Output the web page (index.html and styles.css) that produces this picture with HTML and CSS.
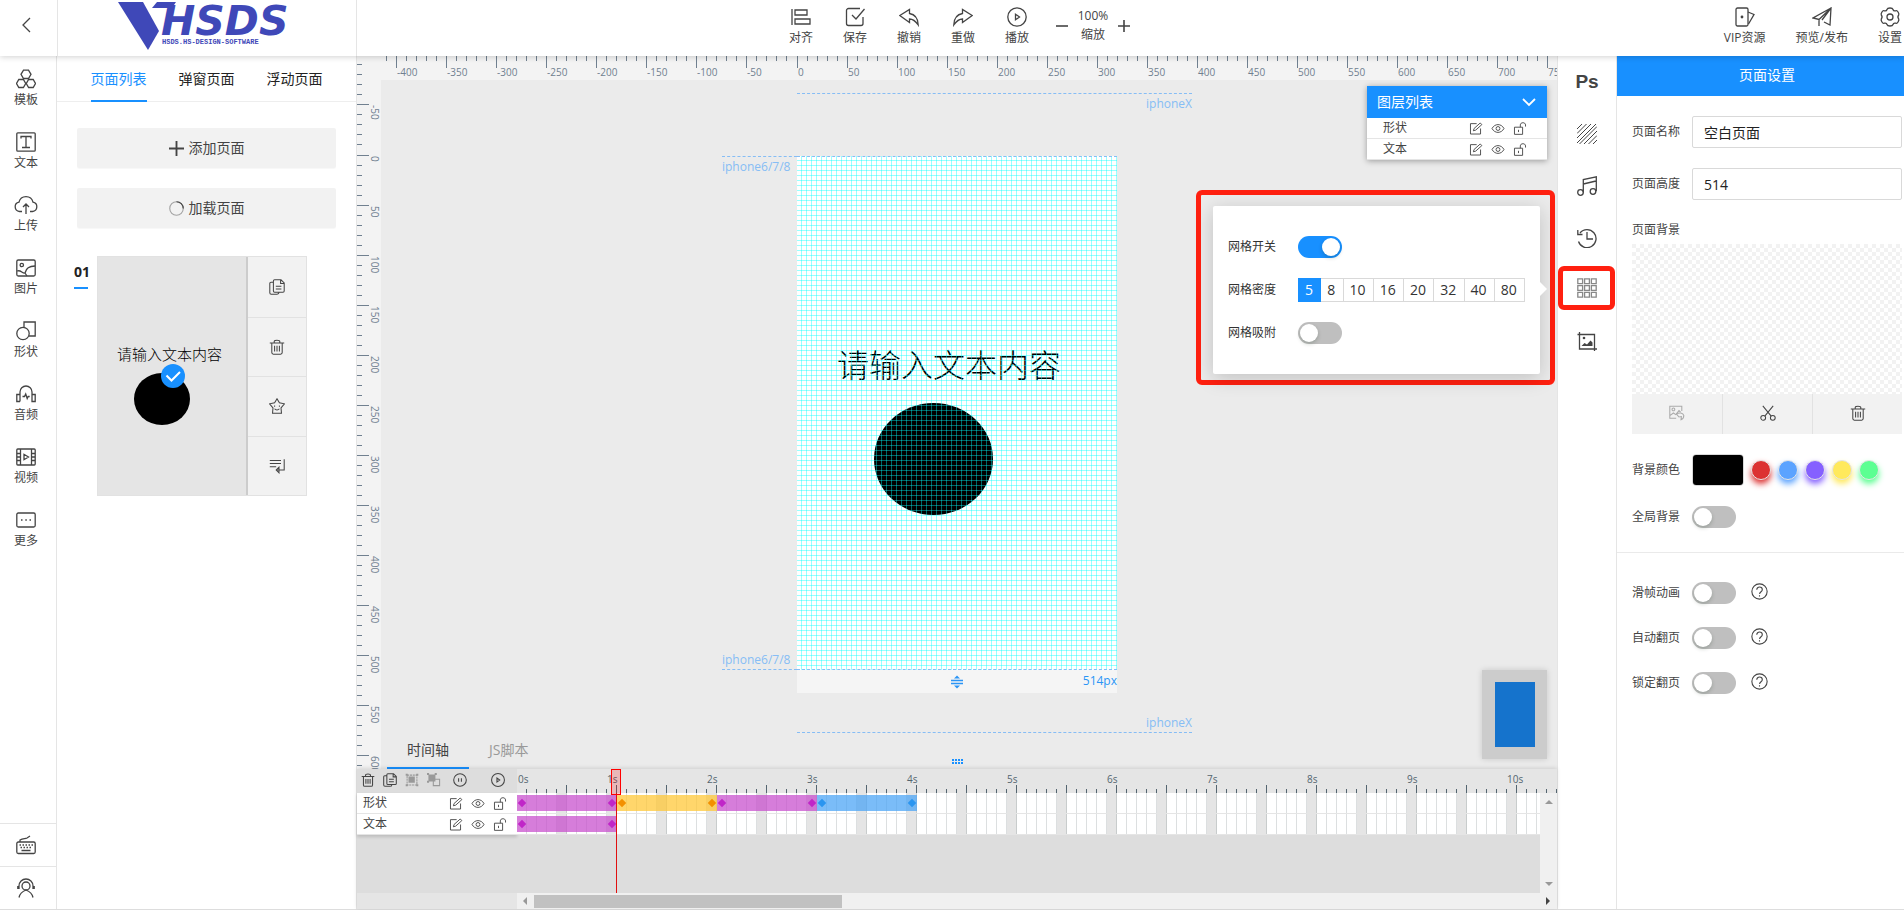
FILE: index.html
```
<!DOCTYPE html>
<html lang="zh-CN">
<head>
<meta charset="utf-8">
<title>HSDS 页面设计</title>
<link rel="stylesheet" href="styles.css">
</head>
<body>
<svg class="sprite" aria-hidden="true">
  <symbol id="back" viewBox="0 0 20 20"><path d="M13 3 6 10l7 7"/></symbol>
  <symbol id="align" viewBox="0 0 20 20"><path d="M1 2v16M4 3h12v5H4zM4 12h15v5H4z"/></symbol>
  <symbol id="save" viewBox="0 0 20 20"><path d="M15 1.500H3.500a2 2 0 0 0-2 2v13a2 2 0 0 0 2 2h12.500a2 2 0 0 0 2-2V10M7 8l4 4 8.500-10"/></symbol>
  <symbol id="undo" viewBox="0 0 20 20"><path d="M.8 8.500 10.500 2.500v4c5 .8 8.500 5 8.700 11.500-2.700-4-5-6-8.700-6V15.500z"/></symbol>
  <symbol id="redo" viewBox="0 0 20 20"><path d="M19.200 8.500 9.500 2.500v4C4.500 7.300 1 11.500.8 18c2.700-4 5-6 8.700-6V15.500z"/></symbol>
  <symbol id="play" viewBox="0 0 20 20"><circle cx="10" cy="10" r="9.200"/><path d="M8.500 7.200v5.600l4-2.800z"/></symbol>
  <symbol id="minus" viewBox="0 0 12 12"><path d="M0 6h12"/></symbol>
  <symbol id="plus" viewBox="0 0 12 12"><path d="M0 6h12M6 0v12"/></symbol>
  <symbol id="vip" viewBox="0 0 20 20"><rect x="1" y="1" width="12" height="18" rx="1.500"/><path d="m13 5 6 2.500L13.500 17"/><circle class="fill" cx="7" cy="10" r="1.400"/></symbol>
  <symbol id="send" viewBox="0 0 20 20"><path d="M19 1 1 11l6 1.500L19 1l-1 17-6-3M7 12.500V19M19 1l-9 12"/></symbol>
  <symbol id="gear" viewBox="0 0 20 20"><path d="M7 2.500c.5-2 5.500-2 6 0s1.500 1.500 3.200 1.200c1.300-.2 3.200 3 2.500 4.300-1.200 1.500-1.200 2.500 0 4 .7 1.300-1.200 4.500-2.500 4.300-1.700-.3-2.700-.8-3.200 1.200s-5.500 2-6 0-1.500-1.500-3.200-1.200C2.500 16.500.6 13.300 1.300 12c1.200-1.500 1.200-2.500 0-4-.7-1.300 1.200-4.500 2.500-4.300C5.500 4 6.500 4.500 7 2.500z"/><circle cx="10" cy="10" r="3"/></symbol>
  <symbol id="tpl" viewBox="0 0 20 20"><path d="M7.500 1.200h5L15 5.300l-2.500 4.200h-5L5 5.300zM2.800 10.500h4.600l2.300 4-2.300 4H2.800l-2.300-4zM12.600 10.500h4.600l2.300 4-2.300 4h-4.600l-2.300-4z"/></symbol>
  <symbol id="text" viewBox="0 0 20 20"><rect x=".8" y=".8" width="18.400" height="18.400" rx="1"/><path d="M5 6.500V4.500h10v2M10 4.500v11M6 15.500h8"/></symbol>
  <symbol id="upload" viewBox="0 0 24 20"><path d="M8 16.500H5.500A4.700 4.700 0 0 1 5 7.200a7.200 7.200 0 0 1 14 0 4.700 4.700 0 0 1-.5 9.300H16M12 19V9M9 12l3-3 3 3"/></symbol>
  <symbol id="image" viewBox="0 0 20 20"><rect x=".8" y="2" width="18.400" height="16" rx="1.500"/><circle cx="5.800" cy="7" r="1.700"/><path d="M1 13c4-1.500 5 2.500 8 2 1-5 5-7 10-7M9 15l2 3"/></symbol>
  <symbol id="shape" viewBox="0 0 20 20"><circle cx="7" cy="12.500" r="6.200"/><path d="M8 6V1h11.200v14H13"/></symbol>
  <symbol id="audio" viewBox="0 0 20 20"><path d="M4 17.500V8a6 6 0 0 1 12 0v9.500h3.200v-7H16M4 10.500H.8v7H4M6.500 12.500h2l1.200-2.500 1.500 4.500 1-2h1.500"/></symbol>
  <symbol id="video" viewBox="0 0 20 20"><rect x=".8" y="2" width="18.400" height="16" rx="1"/><path d="M4.500 2v16M15.500 2v16M1 6.500h3.500M1 10h3.500M1 13.500h3.500M15.500 6.500H19M15.500 10H19M15.500 13.500H19M8 7.300v5.400l4.500-2.700z"/></symbol>
  <symbol id="more" viewBox="0 0 20 20"><rect x=".8" y="3" width="18.400" height="14" rx="1.500"/><path d="M5 10h1.500M9.300 10h1.500M13.500 10H15"/></symbol>
  <symbol id="keyboard" viewBox="0 0 20 20"><rect x=".8" y="7" width="18.400" height="11.500" rx="1.500"/><path d="M4 7V5c3-2 5-1 7-2l3-2M3.500 10H5M6.500 10H8M9.500 10H11M12.500 10H14M15.500 10H17M4.500 12.500H6M7.500 12.500H9M10.500 12.500H12M13.500 12.500H15M5.500 15.500h9"/></symbol>
  <symbol id="service" viewBox="0 0 20 20"><circle cx="10" cy="8" r="4"/><path d="M3 11V8a7 7 0 0 1 14 0v3M1.800 8v3M18.200 8v3M3 19.500c.8-4 3-6 7-7.500 4 1.500 6.200 3.500 7 7.500"/></symbol>
  <symbol id="copy" viewBox="0 0 20 20"><path d="M5 4H2.500A1.500 1.500 0 0 0 1 5.500v11.700A1.800 1.800 0 0 0 2.800 19H10c2 0 2.500-1 2.500-2M7 1h8l4 4v10a1.500 1.500 0 0 1-1.500 1.500H7A1.500 1.500 0 0 1 5.500 15V2.500A1.500 1.500 0 0 1 7 1zM14.500 1v4.500H19M8.500 9h7M8.500 12.500h7"/></symbol>
  <symbol id="trash" viewBox="0 0 20 20"><path d="M1 5h18M6.500 5V3c0-2 7-2 7 0v2M3.500 5v12a2 2 0 0 0 2 2h9a2 2 0 0 0 2-2V5M7 8.500v7M10 8.500v7M13 8.500v7"/></symbol>
  <symbol id="star" viewBox="0 0 20 20"><path d="m10 1 3 5 6.300 1.300-4.300 5 .6 6.700H4.400l.6-6.700-4.300-5L7 6zM7 9.500v1.500M13 9.500v1.500M7 13.500c1.500 2 4.500 2 6 0"/></symbol>
  <symbol id="insert" viewBox="0 0 20 20"><path d="M1 3h14M1 7h14M1 11h8M19 1.500V15h-9M12.500 11.500 9 15l3.500 3.500z"/></symbol>
  <symbol id="edit" viewBox="0 0 20 20"><path d="M11 2.500H1.500v16H17V10M6 13.500l1-3.500 9.500-8.500 2.500 2.500L9.500 12.500z"/></symbol>
  <symbol id="eye" viewBox="0 0 20 20"><path d="M.8 10C5 2 15 2 19.200 10 15 18 5 18 .8 10z"/><circle cx="10" cy="10" r="3"/></symbol>
  <symbol id="lock" viewBox="0 0 20 20"><path d="M1.500 8h12.500v11H1.500zM10.500 8V4.500c0-4.500 8-4.500 8 0V7M7.700 12v3.500"/></symbol>
  <symbol id="group" viewBox="0 0 20 20"><path d="M3 3h14v14H3z" stroke-dasharray="3 1"/><path class="fill" d="M5 5h9v9H5zM1 1h3v3H1zM16 1h3v3h-3zM1 16h3v3H1zM16 16h3v3h-3z"/></symbol>
  <symbol id="ungroup" viewBox="0 0 20 20"><path class="fill" d="M2 2h10v10H2zM0 0h3v3H0zM11 0h3v3h-3zM0 11h3v3H0z"/><path d="M9 9h9v9H9z"/></symbol>
  <symbol id="pause" viewBox="0 0 20 20"><circle cx="10" cy="10" r="9"/><path d="M8 7.500v5M12 7.500v5"/></symbol>
  <symbol id="hatch" viewBox="0 0 20 20"><path d="M0 5 5 0M0 9.500 9.500 0M0 14 14 0M0 19 19 0M2.500 20 20 2.500M7 20 20 7M11.500 20 20 11.500M16 20l4-4"/></symbol>
  <symbol id="music" viewBox="0 0 20 20"><circle cx="3.500" cy="16.500" r="2.800"/><circle cx="16" cy="15.500" r="2.800"/><path d="M6.300 16.500V3.500L19.300 .8v14.500M6.300 8 19 5"/></symbol>
  <symbol id="history" viewBox="0 0 20 20"><path d="M3 5a9 9 0 1 1-1.500 8.500M.8 2v4.500H5.500M10 4v7h6"/></symbol>
  <symbol id="grid" viewBox="0 0 20 20"><path d="M.8.800h4.800v4.800H.8zM7.600.800h4.800v4.800H7.600zM14.400.800h4.800v4.800h-4.800zM.8 7.600h4.800v4.800H.8zM7.600 7.600h4.800v4.800H7.600zM14.400 7.600h4.800v4.800h-4.800zM.8 14.400h4.800v4.800H.8zM7.600 14.400h4.800v4.800H7.600zM14.400 14.400h4.800v4.800h-4.800z"/></symbol>
  <symbol id="crop" viewBox="0 0 20 20"><path d="M.5 2.500h17V19M2.500 0v17H20"/><circle class="fill" cx="7" cy="6" r="1.300"/><path class="fill" d="m4.500 14 3-3 2.500 1.500 3.500-4 2 2V14z"/></symbol>
  <symbol id="swap" viewBox="0 0 20 20"><path d="M9 16.500H1v-15h15v6M1.500 13l4-3 3 2 4-5 2 2"/><circle cx="5.500" cy="5.500" r="1.700"/><path d="M9.500 11.500c3-2.500 8-2 9 1.500 0 2.500-1 4.500-3.500 5.500l.5-4-3 .5z"/></symbol>
  <symbol id="cut" viewBox="0 0 20 20"><circle cx="4" cy="16" r="3"/><circle cx="16" cy="16" r="3"/><path d="m3.500 1 10.500 13M16.500 1 6 14"/></symbol>
  <symbol id="help" viewBox="0 0 20 20"><circle cx="10" cy="10" r="9"/><path d="M6.800 8c0-4.300 6.500-4.300 6.500 0 0 2.500-3.200 2-3.200 5M10 14.500V16"/></symbol>
  <symbol id="spin" viewBox="0 0 20 20"><circle cx="10" cy="10" r="9" opacity=".45"/><path d="M10 1a9 9 0 0 1 9 9"/></symbol>
  <symbol id="down" viewBox="0 0 14 14"><path d="m1 4 6 6 6-6"/></symbol>
  <symbol id="check" viewBox="0 0 24 24"><path d="m5.500 11.500 5 5L19 8"/></symbol>
  <symbol id="resize" viewBox="0 0 14 14"><path d="M1 5.500h12M1 8.500h12"/><path class="fill" d="m7 .5 3 3H4zM7 13.500l3-3H4z"/></symbol>
</svg>

<header class="topbar">
  <button class="back" aria-label="返回"><svg class="icon"><use href="#back"/></svg></button>
  <div class="logo">
    <svg class="logo-mark" viewBox="0 0 190 50" role="img" aria-label="HSDS">
      <path d="M0 0h25l16 29L30 48z"/><path d="M39 0h19l-4 6H34z"/>
      <text class="logo-name" x="43" y="33">HSDS</text>
      <text class="logo-sub" x="44" y="42">HSDS.HS-DESIGN-SOFTWARE</text>
    </svg>
  </div>
  <nav class="tools">
    <button class="tool"><svg class="icon"><use href="#align"/></svg>对齐</button>
    <button class="tool"><svg class="icon"><use href="#save"/></svg>保存</button>
    <button class="tool"><svg class="icon"><use href="#undo"/></svg>撤销</button>
    <button class="tool"><svg class="icon"><use href="#redo"/></svg>重做</button>
    <button class="tool"><svg class="icon"><use href="#play"/></svg>播放</button>
    <div class="zoom">
      <button aria-label="缩小"><svg class="icon"><use href="#minus"/></svg></button>
      <span class="zoom-value">100%<br>缩放</span>
      <button aria-label="放大"><svg class="icon"><use href="#plus"/></svg></button>
    </div>
  </nav>
  <nav class="account">
    <button class="tool"><svg class="icon"><use href="#vip"/></svg>VIP资源</button>
    <button class="tool"><svg class="icon"><use href="#send"/></svg>预览/发布</button>
    <button class="tool"><svg class="icon"><use href="#gear"/></svg>设置</button>
  </nav>
</header>

<div class="workspace">
  <nav class="rail">
    <button><svg class="icon"><use href="#tpl"/></svg>模板</button>
    <button><svg class="icon"><use href="#text"/></svg>文本</button>
    <button><svg class="icon wide"><use href="#upload"/></svg>上传</button>
    <button><svg class="icon"><use href="#image"/></svg>图片</button>
    <button><svg class="icon"><use href="#shape"/></svg>形状</button>
    <button><svg class="icon"><use href="#audio"/></svg>音频</button>
    <button><svg class="icon"><use href="#video"/></svg>视频</button>
    <button><svg class="icon"><use href="#more"/></svg>更多</button>
    <div class="rail-end">
      <button aria-label="快捷键"><svg class="icon"><use href="#keyboard"/></svg></button>
      <button aria-label="客服"><svg class="icon"><use href="#service"/></svg></button>
    </div>
  </nav>

  <section class="pages">
    <div class="page-tabs" role="tablist">
      <button class="active" role="tab">页面列表</button>
      <button role="tab">弹窗页面</button>
      <button role="tab">浮动页面</button>
    </div>
    <div class="page-actions">
      <button><svg class="icon"><use href="#plus"/></svg>添加页面</button>
      <button><svg class="icon"><use href="#spin"/></svg>加载页面</button>
    </div>
    <div class="page-item">
      <strong class="page-no">01</strong>
      <div class="page-card">
        <div class="thumb">
          <span class="thumb-text">请输入文本内容</span>
          <span class="thumb-dot"></span>
          <span class="thumb-check"><svg class="icon"><use href="#check"/></svg></span>
        </div>
        <div class="page-ops">
          <button aria-label="复制"><svg class="icon"><use href="#copy"/></svg></button>
          <button aria-label="删除"><svg class="icon"><use href="#trash"/></svg></button>
          <button aria-label="收藏"><svg class="icon"><use href="#star"/></svg></button>
          <button aria-label="插入"><svg class="icon"><use href="#insert"/></svg></button>
        </div>
      </div>
    </div>
  </section>

  <main class="editor">
    <div class="stage">
      <div class="ruler ruler-h">
        <div class="neg"><span>-400</span><span>-350</span><span>-300</span><span>-250</span><span>-200</span><span>-150</span><span>-100</span><span>-50</span></div>
        <div class="pos"><span>0</span><span>50</span><span>100</span><span>150</span><span>200</span><span>250</span><span>300</span><span>350</span><span>400</span><span>450</span><span>500</span><span>550</span><span>600</span><span>650</span><span>700</span><span>750</span></div>
      </div>
      <div class="ruler ruler-v">
        <div class="neg"><span>-50</span></div>
        <div class="pos"><span>0</span><span>50</span><span>100</span><span>150</span><span>200</span><span>250</span><span>300</span><span>350</span><span>400</span><span>450</span><span>500</span><span>550</span><span>600</span></div>
      </div>

      <div class="guide guide-x top">iphoneX</div>
      <div class="guide guide-8 top">iphone6/7/8</div>
      <div class="guide guide-8 bottom">iphone6/7/8</div>
      <div class="guide guide-x bottom">iphoneX</div>
      <div class="artboard">
        <div class="art-text">请输入文本内容</div>
        <div class="art-dot"></div>
      </div>
      <div class="art-foot"><svg class="icon"><use href="#resize"/></svg><span>514px</span></div>
      <div class="drag-dots"></div>
      <div class="minimap"><div></div></div>

      <section class="layers">
        <button class="layers-head">图层列表<svg class="icon"><use href="#down"/></svg></button>
        <div class="layer"><span>形状</span><button aria-label="编辑"><svg class="icon"><use href="#edit"/></svg></button><button aria-label="显示"><svg class="icon"><use href="#eye"/></svg></button><button aria-label="锁定"><svg class="icon"><use href="#lock"/></svg></button></div>
        <div class="layer"><span>文本</span><button aria-label="编辑"><svg class="icon"><use href="#edit"/></svg></button><button aria-label="显示"><svg class="icon"><use href="#eye"/></svg></button><button aria-label="锁定"><svg class="icon"><use href="#lock"/></svg></button></div>
      </section>

      <div class="callout">
        <form class="grid-pop">
          <div class="pop-row"><label for="g-on">网格开关</label><input class="switch" type="checkbox" id="g-on" checked></div>
          <div class="pop-row"><span>网格密度</span>
            <div class="density">
              <label><input type="radio" name="d" checked>5</label><label><input type="radio" name="d">8</label><label><input type="radio" name="d">10</label><label><input type="radio" name="d">16</label><label><input type="radio" name="d">20</label><label><input type="radio" name="d">32</label><label><input type="radio" name="d">40</label><label><input type="radio" name="d">80</label>
            </div>
          </div>
          <div class="pop-row"><label for="g-snap">网格吸附</label><input class="switch" type="checkbox" id="g-snap"></div>
        </form>
      </div>

      <div class="tl-tabs" role="tablist">
        <button class="active" role="tab">时间轴</button>
        <button role="tab">JS脚本</button>
      </div>
    </div>

    <section class="timeline">
      <div class="tl-side">
        <div class="tl-tools">
          <button aria-label="删除"><svg class="icon"><use href="#trash"/></svg></button>
          <button aria-label="复制"><svg class="icon"><use href="#copy"/></svg></button>
          <button class="off" aria-label="组合"><svg class="icon"><use href="#group"/></svg></button>
          <button class="off" aria-label="拆分"><svg class="icon"><use href="#ungroup"/></svg></button>
          <button class="round" aria-label="暂停"><svg class="icon"><use href="#pause"/></svg></button>
          <button class="round last" aria-label="播放"><svg class="icon"><use href="#play"/></svg></button>
        </div>
        <div class="tl-names">
          <div class="layer"><span>形状</span><button aria-label="编辑"><svg class="icon"><use href="#edit"/></svg></button><button aria-label="显示"><svg class="icon"><use href="#eye"/></svg></button><button aria-label="锁定"><svg class="icon"><use href="#lock"/></svg></button></div>
          <div class="layer"><span>文本</span><button aria-label="编辑"><svg class="icon"><use href="#edit"/></svg></button><button aria-label="显示"><svg class="icon"><use href="#eye"/></svg></button><button aria-label="锁定"><svg class="icon"><use href="#lock"/></svg></button></div>
        </div>
      </div>
      <div class="tl-main">
        <div class="tl-ruler"><span>0s</span><span>1s</span><span>2s</span><span>3s</span><span>4s</span><span>5s</span><span>6s</span><span>7s</span><span>8s</span><span>9s</span><span>10s</span></div>
        <div class="tl-body">
          <div class="tracks">
            <div class="track"><i class="clip purple"></i><i class="clip amber"></i><i class="clip purple"></i><i class="clip blue"></i></div>
            <div class="track"><i class="clip purple"></i></div>
          </div>
          <div class="vbar"><i class="up"></i><i class="dn"></i></div>
        </div>
        <div class="hbar"><i class="lf"></i><div class="thumb-bar"></div><i class="rt"></i></div>
        <div class="playhead"></div>
      </div>
    </section>
  </main>

  <nav class="side-tools">
    <button class="ps">Ps</button>
    <button aria-label="纹理"><svg class="icon thin"><use href="#hatch"/></svg></button>
    <button aria-label="音乐"><svg class="icon"><use href="#music"/></svg></button>
    <button aria-label="历史"><svg class="icon"><use href="#history"/></svg></button>
    <button class="marked" aria-label="网格"><svg class="icon"><use href="#grid"/></svg></button>
    <button aria-label="裁剪"><svg class="icon"><use href="#crop"/></svg></button>
  </nav>

  <aside class="settings">
    <h2>页面设置</h2>
    <div class="fields">
      <div class="field"><label for="p-name">页面名称</label><input class="box" id="p-name" value="空白页面"></div>
      <div class="field"><label for="p-h">页面高度</label><input class="box" id="p-h" value="514"></div>
      <div class="bg-title">页面背景</div>
      <div class="checker"></div>
      <div class="bg-ops">
        <button class="off" aria-label="更换"><svg class="icon"><use href="#swap"/></svg></button>
        <button aria-label="剪裁"><svg class="icon"><use href="#cut"/></svg></button>
        <button aria-label="删除"><svg class="icon"><use href="#trash"/></svg></button>
      </div>
      <div class="field color"><label for="p-c">背景颜色</label><input type="color" id="p-c" value="#000000">
        <button class="dot red" aria-label="红"></button><button class="dot sky" aria-label="蓝"></button><button class="dot violet" aria-label="紫"></button><button class="dot yellow" aria-label="黄"></button><button class="dot green" aria-label="绿"></button>
      </div>
      <div class="field"><label for="p-g">全局背景</label><input class="switch" type="checkbox" id="p-g"></div>
    </div>
    <div class="options">
      <div class="field"><label for="o-1">滑帧动画</label><input class="switch" type="checkbox" id="o-1"><svg class="icon help"><use href="#help"/></svg></div>
      <div class="field"><label for="o-2">自动翻页</label><input class="switch" type="checkbox" id="o-2"><svg class="icon help"><use href="#help"/></svg></div>
      <div class="field"><label for="o-3">锁定翻页</label><input class="switch" type="checkbox" id="o-3"><svg class="icon help"><use href="#help"/></svg></div>
    </div>
  </aside>
</div>
</body>
</html>
```

FILE: styles.css
```
* { box-sizing: border-box; }
body {
  margin: 0;
  height: 100vh;
  display: flex;
  flex-direction: column;
  overflow: hidden;
  background: #fff;
  color: #444;
  font: 12px/16px "Open Sans", "Noto Sans CJK SC", sans-serif;
}
button {
  margin: 0;
  padding: 0;
  border: 0;
  background: none;
  color: inherit;
  font: inherit;
  display: flex;
  align-items: center;
  justify-content: center;
  cursor: pointer;
}
.sprite { position: absolute; width: 0; height: 0; }
.icon {
  width: 20px;
  height: 20px;
  flex: none;
  fill: none;
  stroke: currentColor;
  stroke-width: 1.3;
}
.icon.thin { stroke-width: 1; }
.fill { fill: currentColor; stroke: none; }

/* top bar */
.topbar {
  flex: none;
  height: 56px;
  display: grid;
  grid-template-columns: 58px 299px 1fr auto;
  background: #fff;
  box-shadow: 0 1px 6px rgba(0, 0, 0, .18);
  position: relative;
  z-index: 5;
}
.back { border-right: 1px solid #e5e5e5; padding-right: 4px; padding-bottom: 6px; }
.logo { border-right: 1px solid #e5e5e5; padding: 2px 0 0 60px; }
.logo-mark { width: 190px; height: 50px; fill: #3f48b8; display: block; overflow: visible; }
.logo-name { font: italic bold 41px "DejaVu Sans", sans-serif; }
.logo-sub { font: bold 7px "Liberation Mono", monospace; }
.tools { display: flex; padding-left: 417px; }
.tool { flex-direction: column; justify-content: flex-start; width: 54px; gap: 2px; padding-top: 7px; line-height: 18px; }
.zoom { display: flex; align-items: center; padding: 0 0 4px 12px; gap: 7px; }
.zoom .icon { width: 12px; height: 12px; stroke-width: 1.6; }
.zoom-value { text-align: center; line-height: 19px; padding-bottom: 2px; width: 36px; }
.zoom button { width: 12px; }
.account { display: flex; }
.account .tool { width: auto; white-space: nowrap; margin-left: 30px; }
.account .tool:last-child { margin-right: 2px; }

.workspace {
  flex: 1;
  min-height: 0;
  display: grid;
  grid-template-columns: 57px 300px 1fr 60px 287px;
  border-bottom: 1px solid #ddd;
}

/* left rail */
.rail { border-right: 1px solid #e5e5e5; display: flex; flex-direction: column; padding: 10px 4px 0 0; }
.rail > button { flex-direction: column; height: 63px; gap: 2px; justify-content: flex-start; padding-top: 3px; line-height: 18px; }
.rail .icon.wide { width: 24px; }
.rail-end { margin: auto -4px 0 0; }
.rail-end button { width: 100%; height: 43px; border-top: 1px solid #e5e5e5; padding-right: 4px; }

/* page list */
.pages { border-right: 1px solid #e5e5e5; min-width: 0; }
.page-tabs { display: flex; justify-content: center; gap: 32px; height: 46px; border-bottom: 1px solid #eee; }
.page-tabs button { font-size: 14px; color: #222; border-bottom: 2px solid transparent; height: 46px; padding-top: 2px; }
.page-tabs .active { color: #1890ff; border-color: #1890ff; }
.page-actions { display: grid; gap: 20px; padding: 26px 20px 20px; }
.page-actions button { height: 40px; background: #f2f2f2; border-radius: 2px; font-size: 14px; gap: 5px; box-shadow: 0 1px 1px #f8f8f8; }
.page-actions .icon { width: 15px; height: 15px; stroke-width: 1.5; }
.page-item { display: flex; padding: 8px 0 0 17px; gap: 8px; }
.page-no { color: #222; font-size: 14px; line-height: 20px; width: 15px; padding-top: 6px; align-self: flex-start; }
.page-no::after { content: ""; display: block; width: 14px; height: 2px; margin-top: 5px; background: #1890ff; }
.page-card { width: 210px; height: 240px; display: flex; border: 1px solid #e2e2e2; }
.thumb { flex: 1; background: #e5e5e5; position: relative; border-right: 2px solid #ccc; }
.thumb span { position: absolute; }
.thumb-text { left: 19px; top: 87px; color: #000; font-size: 15px; line-height: 20px; font-weight: 300; white-space: nowrap; }
.thumb-dot { left: 36px; top: 116px; width: 56px; height: 52px; border-radius: 50%; background: #000; }
.thumb-check { left: 63px; top: 107px; width: 24px; height: 24px; border-radius: 50%; background: #1890ff; color: #fff; }
.thumb-check .icon { width: 24px; height: 24px; stroke-width: 2; display: block; }
.page-ops { width: 58px; display: grid; grid-template-rows: repeat(4, 1fr); background: #f2f2f2; }
.page-ops button + button { border-top: 1px solid #e2e2e2; }
.page-ops .icon { width: 16px; height: 16px; }

/* editor */
.editor { display: flex; flex-direction: column; min-width: 0; }
.stage { flex: 1; background: #ebebeb; position: relative; overflow: hidden; }
.ruler { position: absolute; display: flex; background: #f3f3f3; color: #708090; font-size: 10px; line-height: 12px; left: 0; top: 0; }
.ruler div { display: flex; overflow: hidden; flex: none; }
.ruler span { flex: 0 0 50px; }
.ruler .neg { justify-content: flex-end; }
.ruler .pos { flex: 1; }
.ruler-h { right: 0; height: 24px; }
.ruler-h .neg { width: calc(50% - 161px); background-position: right top; }
.ruler-h .neg, .ruler-h .pos {
  background-image: linear-gradient(90deg, #708090 1px, transparent 1px), linear-gradient(90deg, #708090 1px, transparent 1px);
  background-size: 10px 5px, 50px 12px;
  background-repeat: repeat-x;
}
.ruler-h .pos { margin-left: 1px; }
.ruler-h span { padding: 10px 0 0 1px; }
.ruler-v { width: 24px; bottom: 0; flex-direction: column; }
.ruler-v .neg { height: 98px; background-position: left bottom; }
.ruler-v div { flex-direction: column; }
.ruler-v .neg, .ruler-v .pos {
  background-image: linear-gradient(#708090 1px, transparent 1px), linear-gradient(#708090 1px, transparent 1px);
  background-size: 5px 10px, 12px 50px;
  background-repeat: repeat-y;
}
.ruler-v .pos { margin-top: 1px; }
.ruler-v span { writing-mode: vertical-rl; padding: 1px 0 0 12px; width: 24px; }

.guide { position: absolute; color: #86bdf5; line-height: 16px; }
.guide-x { left: calc(50% - 160px); width: 395px; text-align: right; }
.guide-8 { left: calc(50% - 235px); width: 75px; }
.guide.top { border-top: 1px dashed #86bdf5; padding-top: 2px; }
.guide.bottom { border-bottom: 1px dashed #86bdf5; padding-bottom: 1px; }
.guide-x.top { top: 37px; }
.guide-8.top { top: 100px; }
.guide-8.bottom { top: 596px; }
.guide-x.bottom { top: 659px; }
.artboard { position: absolute; left: calc(50% - 160px); top: 100px; width: 320px; height: 514px; background: #fff; color: #000; }
.artboard::after {
  content: "";
  position: absolute;
  inset: 0;
  border: 1px dashed #86bdf5;
  border-width: 1px 0;
  background: repeating-linear-gradient(90deg, transparent 0 4px, rgba(0, 255, 255, .4) 4px 5px), repeating-linear-gradient(transparent 0 4px, rgba(0, 255, 255, .4) 4px 5px);
  background-origin: border-box;
}
.art-text { position: absolute; left: 40px; top: 189px; font-size: 32px; line-height: 40px; font-weight: 300; white-space: nowrap; }
.art-dot { position: absolute; left: 77px; top: 247px; width: 119px; height: 112px; border-radius: 50%; background: #000; }
.art-foot { position: absolute; left: calc(50% - 160px); top: 614px; width: 320px; height: 23px; background: #f5f5f5; color: #2b95f5; display: grid; grid-template-columns: 1fr 14px 1fr; align-items: center; }
.art-foot .icon { grid-column: 2; width: 14px; height: 14px; }
.art-foot span { text-align: right; padding-bottom: 2px; }
.drag-dots { position: absolute; left: calc(50% - 5px); bottom: 5px; width: 11px; height: 5px; background: repeating-linear-gradient(90deg, #1890ff 0 2px, transparent 2px 3px); clip-path: polygon(0 0, 100% 0, 100% 40%, 0 40%, 0 60%, 100% 60%, 100% 100%, 0 100%); }
.minimap { position: absolute; right: 10px; bottom: 10px; width: 65px; height: 89px; padding: 12px 12px 12px 13px; background: #ccc; box-shadow: 0 0 6px rgba(0, 0, 0, .15); }
.minimap div { height: 100%; background: #1573cc; }

.layers { position: absolute; right: 10px; top: 30px; width: 180px; background: #fff; box-shadow: 0 1px 6px rgba(0, 0, 0, .35); }
.layers-head { width: 100%; height: 32px; padding: 0 11px 0 10px; justify-content: space-between; background: #1890ff; color: #fff; font-size: 14px; }
.layers-head .icon { width: 14px; height: 14px; stroke-width: 1.8; }
.layer { display: flex; align-items: center; height: 21px; padding: 0 10px 0 6px; gap: 8px; background: #fff; border-bottom: 1px solid #e5e5e5; color: #444; }
.layer span { flex: 1; }
.layer .icon { width: 14px; height: 13px; stroke-width: 1.4; }
.layers .layer { padding: 0 20px 0 16px; }

.callout { position: absolute; right: 2px; top: 134px; width: 359px; height: 195px; border: 5px solid #ff2010; border-radius: 6px; padding: 11px 10px 11px 12px; }
.grid-pop { position: relative; height: 168px; padding: 0 15px; background: #fff; border-radius: 2px; box-shadow: 0 4px 20px rgba(0, 0, 0, .18); display: grid; gap: 19px; align-content: center; color: #333; }
.grid-pop::after { content: ""; position: absolute; left: 100%; top: 76px; border: 7px solid transparent; border-left-color: #fff; border-right: 0; }
.pop-row { display: grid; grid-template-columns: 70px 1fr; align-items: center; height: 24px; }
.switch { appearance: none; margin: 0; width: 44px; height: 22px; border-radius: 11px; background: #bfbfbf; padding: 2px; display: flex; flex: none; }
.switch::before { content: ""; width: 18px; height: 18px; border-radius: 50%; background: #fff; box-shadow: 0 2px 4px rgba(0, 35, 11, .2); }
.switch:checked { background: #1890ff; justify-content: flex-end; }
.density { display: flex; font-size: 14px; line-height: 22px; color: #333; }
.density label { border: 1px solid #d9d9d9; border-left-width: 0; padding: 0 7px 0 6px; flex: 1 1 auto; text-align: center; }
.density input { position: absolute; opacity: 0; width: 0; height: 0; margin: 0; }
.density label:has(:checked) { background: #1890ff; border-color: #1890ff; color: #fff; padding: 0 7px; }

.tl-tabs { position: absolute; left: 24px; right: 0; bottom: 0; height: 36px; display: flex; padding-left: 6px; pointer-events: none; }
.tl-tabs button { font-size: 14px; padding: 0 20px; color: #999; border-bottom: 2px solid transparent; pointer-events: auto; }
.tl-tabs .active { color: #444; border-color: #1890ff; }

/* timeline */
.timeline { flex: none; height: 140px; display: grid; grid-template-columns: 160px 1fr; background: #ddd; box-shadow: 0 -1px 4px rgba(0, 0, 0, .12); position: relative; }
.tl-side { border-bottom: 16px solid #e5e5e5; }
.tl-tools { height: 24px; display: flex; align-items: center; padding: 0 11px 2px 3px; gap: 6px; }
.tl-tools .icon { width: 16px; height: 14px; stroke-width: 1.5; }
.tl-tools .off { color: #999; }
.tl-tools .round { margin-left: 4px; }
.tl-tools .last { margin-left: auto; }
.tl-names { box-shadow: 0 2px 3px rgba(0, 0, 0, .15); }
.tl-main { display: grid; grid-template-rows: 24px 1fr 16px; position: relative; min-width: 0; }
.tl-ruler {
  display: flex;
  overflow: hidden;
  font-size: 10px;
  line-height: 20px;
  color: #546570;
  background:
    linear-gradient(270deg, #546570 1px, transparent 1px) left bottom / 10px 4px repeat-x,
    linear-gradient(270deg, #546570 1px, transparent 1px) left bottom / 50px 8px repeat-x,
    #e5e5e5;
}
.tl-ruler span { flex: 0 0 100px; }
.tl-ruler span:first-child { flex-basis: 90px; padding-left: 1px; }
.tl-body { display: grid; grid-template-columns: 1fr 17px; min-height: 0; }
.track {
  height: 21px;
  padding-top: 2px;
  display: flex;
  border-bottom: 1px solid #e5e5e5;
  background:
    linear-gradient(90deg, transparent 49px, #c8cccc 49px) 0 0 / 50px 100%,
    linear-gradient(90deg, transparent 40px, #e5e5e5 40px) 0 0 / 50px 100%,
    linear-gradient(90deg, #fff 9px, #dcdfe0 9px) 0 0 / 10px 100%;
}
.clip { width: 100px; height: 16px; padding: 0 2px; display: flex; align-items: center; justify-content: space-between; }
.clip::before, .clip::after { content: ""; width: 6px; height: 6px; background: var(--key); transform: rotate(45deg); }
.purple { background: rgba(200, 80, 205, .74); --key: #c026c8; }
.amber { background: rgba(255, 200, 55, .74); --key: #f39000; }
.blue { background: rgba(75, 165, 245, .74); --key: #2a95f0; }
.vbar { background: #f0f0f0; display: flex; flex-direction: column; justify-content: space-between; align-items: center; padding: 7px 0; }
.up, .dn { border: 4px solid transparent; }
.up { border-bottom-color: #999; border-top: 0; }
.dn { border-top-color: #999; border-bottom: 0; }
.hbar { background: #f0f0f0; display: flex; align-items: center; padding: 0 7px 0 6px; }
.thumb-bar { width: 308px; height: 13px; background: #c1c1c1; margin: 0 auto 0 7px; }
.lf, .rt { border: 4px solid transparent; }
.lf { border-right-color: #999; border-left: 0; }
.rt { border-left-color: #444; border-right: 0; }
.playhead { position: absolute; left: 94px; top: 0; bottom: 16px; width: 10px; }
.playhead::before { content: ""; display: block; height: 24px; border: 1px solid #f00; background: rgba(255, 0, 0, .2); }
.playhead::after { content: ""; position: absolute; left: 5px; top: 24px; bottom: 0; width: 1px; background: #e01010; }

/* right tool strip */
.side-tools { border: 1px solid #e5e5e5; border-width: 0 1px; display: flex; flex-direction: column; }
.side-tools button { height: 52px; }
.side-tools .marked { height: 44px; margin: 2px 1px 6px 0; border: 5px solid #ff2010; border-radius: 6px; }
.side-tools .marked .icon { color: #888; }
.side-tools .ps { font-size: 19px; font-weight: 800; font-family: "Liberation Sans", sans-serif; }

/* settings */
.settings { min-width: 0; }
.settings h2 { margin: 0; height: 40px; padding: 2px 0 4px 13px; background: #1890ff; color: #fff; font-size: 14px; font-weight: 400; line-height: 34px; text-align: center; }
.fields { padding: 20px 2px 0 15px; }
.field { display: flex; align-items: center; }
.field label { width: 60px; flex: none; }
.box { flex: 1; min-width: 0; height: 32px; margin-bottom: 20px; padding: 0 11px; border: 1px solid #d9d9d9; border-radius: 2px; font: inherit; font-size: 14px; color: #222; }
.field label:has(+ .box) { padding-bottom: 20px; }
.bg-title { line-height: 20px; padding-bottom: 4px; }
.checker { height: 150px; background: repeating-conic-gradient(#fff 0 25%, #f2f2f2 0 50%) 0 0 / 8px 8px; }
.bg-ops { display: grid; grid-template-columns: repeat(3, 1fr); height: 40px; background: #f2f2f2; }
.bg-ops button { padding-bottom: 2px; }
.bg-ops button + button { border-left: 1px solid #e2e2e2; }
.bg-ops .icon { width: 16px; height: 16px; }
.bg-ops .off { color: #aaa; }
.field.color { padding: 20px 0; gap: 7px; }
.field.color label { width: 53px; }
.field.color input { appearance: none; width: 52px; height: 32px; margin: 0; padding: 0; border: 1px solid #d9d9d9; border-radius: 4px; background: #000; overflow: hidden; }
.field.color input::-webkit-color-swatch-wrapper { padding: 0; }
.field.color input::-webkit-color-swatch { border: 0; }
.dot { width: 20px; height: 20px; border-radius: 50%; border: 1px solid #e5e5e5; background: var(--c); box-shadow: 0 4px 6px var(--c); }
.red { --c: #dc3232; }
.sky { --c: #5ba3ff; }
.violet { --c: #8560ff; }
.yellow { --c: #ffe95c; }
.green { --c: #5cff92; }
.options { margin-top: 24px; padding: 28px 2px 0 15px; border-top: 1px solid #eaeaea; display: grid; gap: 21px; }
.options .field { height: 24px; }
.help { width: 17px; height: 17px; margin: 0 0 4px 15px; }
```
